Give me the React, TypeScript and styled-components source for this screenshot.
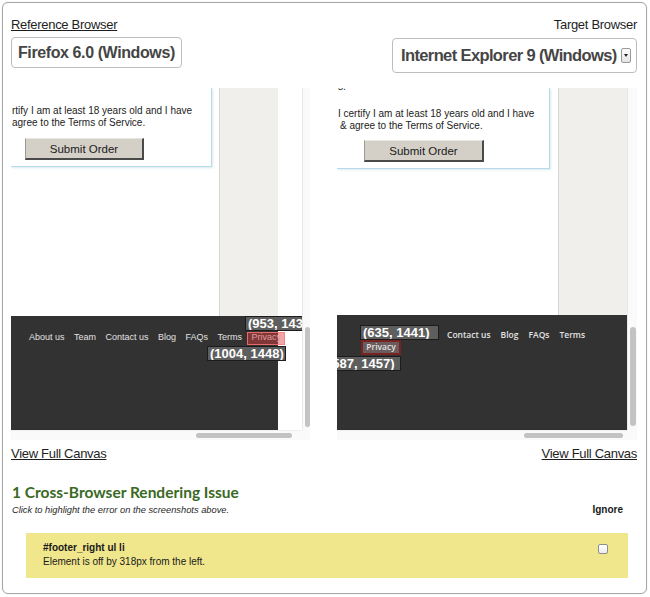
import React from 'react';
import styled, { createGlobalStyle } from 'styled-components';

const Global = createGlobalStyle`
  html, body { margin: 0; padding: 0; background: #fff; }
  body { font-family: "Liberation Sans", Arial, sans-serif; color: #222; }
`;

const Frame = styled.div`
  box-sizing: border-box;
  width: 645px;
  height: 592px;
  margin: 2px;
  border: 1px solid #a6a6a6;
  border-radius: 6px;
  box-shadow: 0 0 1px rgba(0, 0, 0, 0.25);
  padding: 0 9px 0 8px;
  display: flex;
  flex-direction: column;
`;

const Columns = styled.div`
  display: grid;
  grid-template-columns: 299px 300px;
  column-gap: 27px;
`;

const Column = styled.div<{ $end?: boolean }>`
  display: flex;
  flex-direction: column;
  align-items: ${p => (p.$end ? 'flex-end' : 'flex-start')};
`;

const Header = styled.div<{ $end?: boolean }>`
  box-sizing: border-box;
  height: 85px;
  padding-top: 14px;
  align-self: stretch;
  display: flex;
  flex-direction: column;
  align-items: ${p => (p.$end ? 'flex-end' : 'flex-start')};
`;

const BrowserLabel = styled.span<{ $underline?: boolean }>`
  font-size: 13px;
  line-height: 16px;
  letter-spacing: -0.3px;
  color: #1e1e1e;
  text-decoration: ${p => (p.$underline ? 'underline' : 'none')};
`;

const BrowserSelect = styled.div<{ $big?: boolean }>`
  box-sizing: border-box;
  margin-top: ${p => (p.$big ? 5 : 4)}px;
  width: ${p => (p.$big ? 245 : 171)}px;
  height: ${p => (p.$big ? 35 : 31)}px;
  border: 1px solid #bdbdbd;
  border-radius: 4px;
  padding: 0 ${p => (p.$big ? 5 : 6)}px 0 ${p => (p.$big ? 8 : 6)}px;
  display: flex;
  align-items: center;
  justify-content: space-between;
  font-weight: bold;
  font-size: ${p => (p.$big ? 16.5 : 16)}px;
  letter-spacing: ${p => (p.$big ? -0.62 : -0.4)}px;
  color: #454545;
  background: #fff;
`;

const DropArrow = styled.span`
  box-sizing: border-box;
  width: 10px;
  height: 15px;
  border: 1px solid #9a9a9a;
  border-radius: 2px;
  background: linear-gradient(#fdfdfd, #e4e4e4);
  display: flex;
  align-items: center;
  justify-content: center;
  &::after {
    content: '';
    border-left: 2.5px solid transparent;
    border-right: 2.5px solid transparent;
    border-top: 3px solid #222;
  }
`;

const Viewport = styled.div<{ $bar: number }>`
  align-self: stretch;
  height: 352px;
  display: grid;
  grid-template-columns: 1fr ${p => p.$bar}px;
  grid-template-rows: 1fr 10px;
`;

const Screen = styled.div`
  position: relative;
  overflow: hidden;
  background: #fff;
  display: flex;
  flex-direction: column;
  font-family: "Liberation Sans", Arial, sans-serif;
`;

const PageTop = styled.div<{ $h: number; $w: number }>`
  display: flex;
  height: ${p => p.$h}px;
  width: ${p => p.$w}px;
`;

const ContentCol = styled.div`
  flex: 1;
  background: #fff;
`;

const SideCol = styled.div<{ $w: number }>`
  box-sizing: border-box;
  width: ${p => p.$w}px;
  background: #f0efeb;
  border-left: 1px solid #d6d6d2;
`;

const Card = styled.div<{ $w: number; $top: number; $bottom: number }>`
  box-sizing: border-box;
  width: ${p => p.$w}px;
  background: #fff;
  border-right: 1px solid #b7dbe8;
  border-bottom: 1px solid #b7dbe8;
  box-shadow: 1px 1px 2px rgba(150, 190, 205, 0.35);
  padding: ${p => p.$top}px 0 ${p => p.$bottom}px 0;
  font-size: 10px;
  line-height: 12px;
  color: #222;
`;

const PartialLine = styled.div`
  height: 5px;
  overflow: hidden;
  display: flex;
  align-items: flex-end;
  & > span { line-height: 12px; padding-left: 1px; }
`;

const CardText = styled.div<{ $mt: number }>`
  margin-top: ${p => p.$mt}px;
`;

const TextLine = styled.div<{ $indent: number }>`
  padding-left: ${p => p.$indent}px;
  white-space: nowrap;
`;

const SubmitButton = styled.div<{ $ml: number; $w: number; $mt: number; $h: number }>`
  box-sizing: border-box;
  margin: ${p => p.$mt}px 0 0 ${p => p.$ml}px;
  width: ${p => p.$w}px;
  height: ${p => p.$h}px;
  background: #d4d0c8;
  border-top: 1px solid #e8e6e0;
  border-left: 1px solid #9a9a96;
  border-right: 2px solid #4a4a4a;
  border-bottom: 2px solid #4a4a4a;
  display: flex;
  align-items: center;
  justify-content: center;
  font-size: 11.5px;
  color: #1a1a1a;
`;

const Footer = styled.div<{ $w: number }>`
  flex: 1;
  width: ${p => p.$w}px;
  background: #323232;
`;

const FooterLinks = styled.ul<{ $ml: number; $pt: number; $right?: boolean }>`
  list-style: none;
  margin: 0;
  padding: ${p => p.$pt}px 0 0 ${p => p.$ml}px;
  display: flex;
  gap: ${p => (p.$right ? 10 : 9.5)}px;
  font-family: ${p => (p.$right ? '"Open Sans", sans-serif' : '"Liberation Sans", Arial, sans-serif')};
  font-size: ${p => (p.$right ? 8.5 : 9)}px;
  font-weight: ${p => (p.$right ? 600 : 400)};
  line-height: 12px;
  color: #e2e2e2;
  white-space: nowrap;
`;

const CoordTag = styled.div<{ $x: number; $y: number; $w: number }>`
  position: absolute;
  left: ${p => p.$x}px;
  top: ${p => p.$y}px;
  width: ${p => p.$w}px;
  box-sizing: border-box;
  height: 15px;
  background: #5e5e5e;
  border: 1px solid #1c1c1c;
  color: #fff;
  font-weight: bold;
  font-size: 13px;
  line-height: 13px;
  padding: 0 2px;
  white-space: nowrap;
  overflow: hidden;
`;

const Highlight = styled.div<{ $x: number; $y: number; $w: number; $h: number }>`
  position: absolute;
  left: ${p => p.$x}px;
  top: ${p => p.$y}px;
  width: ${p => p.$w}px;
  height: ${p => p.$h}px;
  box-sizing: border-box;
  background: rgba(225, 60, 60, 0.45);
  border: 1px solid rgba(255, 120, 120, 0.8);
`;

const MovedItem = styled.div<{ $x: number; $y: number; $w: number; $h: number }>`
  position: absolute;
  left: ${p => p.$x}px;
  top: ${p => p.$y}px;
  width: ${p => p.$w}px;
  height: ${p => p.$h}px;
  box-sizing: border-box;
  background: #6a5c5c;
  border: 2px solid #7a2222;
  color: #e4e4e4;
  font-family: "Open Sans", sans-serif;
  font-size: 8.5px;
  font-weight: 600;
  line-height: 10px;
  text-align: center;
`;

const VTrack = styled.div<{ $thumbTop: number; $thumbH: number; $thumbW: number }>`
  box-sizing: border-box;
  background: #fafafa;
  border-left: 1px solid #e9e9e9;
  padding: ${p => p.$thumbTop}px 0 0 2px;
  &::after {
    content: '';
    display: block;
    width: ${p => p.$thumbW}px;
    height: ${p => p.$thumbH}px;
    border-radius: 3px;
    background: #c3c3c3;
  }
`;

const HTrack = styled.div<{ $thumbLeft: number; $thumbW: number }>`
  box-sizing: border-box;
  background: #fafafa;
  border-top: 1px solid #efefef;
  padding: 2px 0 0 ${p => p.$thumbLeft}px;
  &::after {
    content: '';
    display: block;
    width: ${p => p.$thumbW}px;
    height: 5px;
    border-radius: 3px;
    background: #c3c3c3;
  }
`;

const Corner = styled.div`
  background: #fafafa;
`;

const CanvasLink = styled.a`
  margin-top: 6px;
  font-size: 13px;
  line-height: 15px;
  letter-spacing: -0.3px;
  color: #1e1e1e;
  text-decoration: underline;
  cursor: pointer;
`;

const IssueTitle = styled.h2`
  margin: 21px 0 0 1px;
  font-family: Lato, "Open Sans", sans-serif;
  font-weight: bold;
  font-size: 15.5px;
  line-height: 20px;
  color: #3a6a24;
`;

const IssueSub = styled.div`
  display: flex;
  justify-content: space-between;
  align-items: baseline;
  margin-top: 2px;
  padding: 0 14px 0 1px;
  line-height: 12px;
`;

const Hint = styled.span`
  font-style: italic;
  font-size: 9.3px;
  color: #2a2a2a;
`;

const IgnoreLabel = styled.span`
  font-weight: bold;
  font-size: 10px;
  color: #1a1a1a;
`;

const IssueCard = styled.div`
  box-sizing: border-box;
  height: 45px;
  margin: 17px 9px 0 15px;
  background: #f0e68c;
  padding: 8px 20px 0 17px;
  display: flex;
  justify-content: space-between;
  align-items: flex-start;
  cursor: pointer;
`;

const IssueText = styled.div`
  font-size: 10px;
  line-height: 14px;
  color: #1a1a1a;
`;

const Selector = styled.div`
  font-weight: bold;
`;

const Check = styled.span`
  box-sizing: border-box;
  margin-top: 3px;
  width: 10px;
  height: 10px;
  border: 1px solid #8e8e8e;
  border-radius: 2px;
  background: linear-gradient(#fff, #ececec);
`;

const leftLinks = ['About us', 'Team', 'Contact us', 'Blog', 'FAQs', 'Terms', 'Privacy'];
const rightLinks = ['Contact us', 'Blog', 'FAQs', 'Terms'];

export default function App() {
  return (
    <>
      <Global />
      <Frame>
        <Columns>
          <Column>
            <Header>
              <BrowserLabel $underline>Reference Browser</BrowserLabel>
              <BrowserSelect>Firefox 6.0 (Windows)</BrowserSelect>
            </Header>
            <Viewport $bar={8}>
              <Screen>
                <PageTop $h={228} $w={267}>
                  <ContentCol>
                    <Card $w={201} $top={17} $bottom={6}>
                      <CardText $mt={0}>
                        <TextLine $indent={1}>rtify I am at least 18 years old and I have</TextLine>
                        <TextLine $indent={1}>agree to the Terms of Service.</TextLine>
                      </CardText>
                      <SubmitButton $ml={14} $w={119} $mt={9} $h={22}>Submit Order</SubmitButton>
                    </Card>
                  </ContentCol>
                  <SideCol $w={59} />
                </PageTop>
                <Footer $w={267}>
                  <FooterLinks $ml={18} $pt={15}>
                    {leftLinks.map(l => (
                      <li key={l}>{l}</li>
                    ))}
                  </FooterLinks>
                </Footer>
                <Highlight $x={236} $y={244} $w={38} $h={13} />
                <CoordTag $x={234} $y={228} $w={72}>(953, 1432)</CoordTag>
                <CoordTag $x={196} $y={258} $w={79}>(1004, 1448)</CoordTag>
              </Screen>
              <VTrack $thumbTop={239} $thumbH={100} $thumbW={5} />
              <HTrack $thumbLeft={185} $thumbW={96} />
              <Corner />
            </Viewport>
            <CanvasLink>View Full Canvas</CanvasLink>
          </Column>
          <Column $end>
            <Header $end>
              <BrowserLabel>Target Browser</BrowserLabel>
              <BrowserSelect $big>
                Internet Explorer 9 (Windows)
                <DropArrow />
              </BrowserSelect>
            </Header>
            <Viewport $bar={10}>
              <Screen>
                <PageTop $h={227} $w={290}>
                  <ContentCol>
                    <Card $w={213} $top={0} $bottom={6}>
                      <PartialLine>
                        <span>s.</span>
                      </PartialLine>
                      <CardText $mt={15}>
                        <TextLine $indent={1}>I certify I am at least 18 years old and I have</TextLine>
                        <TextLine $indent={3}>&amp; agree to the Terms of Service.</TextLine>
                      </CardText>
                      <SubmitButton $ml={27} $w={120} $mt={8} $h={22}>Submit Order</SubmitButton>
                    </Card>
                  </ContentCol>
                  <SideCol $w={69} />
                </PageTop>
                <Footer $w={290}>
                  <FooterLinks $ml={110} $pt={14} $right>
                    {rightLinks.map(l => (
                      <li key={l}>{l}</li>
                    ))}
                  </FooterLinks>
                </Footer>
                <CoordTag $x={23} $y={237} $w={79}>(635, 1441)</CoordTag>
                <MovedItem $x={24} $y={252} $w={40} $h={15}>Privacy</MovedItem>
                <CoordTag $x={-12} $y={268} $w={76}>(587, 1457)</CoordTag>
              </Screen>
              <VTrack $thumbTop={239} $thumbH={99} $thumbW={6} />
              <HTrack $thumbLeft={187} $thumbW={99} />
              <Corner />
            </Viewport>
            <CanvasLink>View Full Canvas</CanvasLink>
          </Column>
        </Columns>
        <IssueTitle>1 Cross-Browser Rendering Issue</IssueTitle>
        <IssueSub>
          <Hint>Click to highlight the error on the screenshots above.</Hint>
          <IgnoreLabel>Ignore</IgnoreLabel>
        </IssueSub>
        <IssueCard>
          <IssueText>
            <Selector>#footer_right ul li</Selector>
            <div>Element is off by 318px from the left.</div>
          </IssueText>
          <Check />
        </IssueCard>
      </Frame>
    </>
  );
}
